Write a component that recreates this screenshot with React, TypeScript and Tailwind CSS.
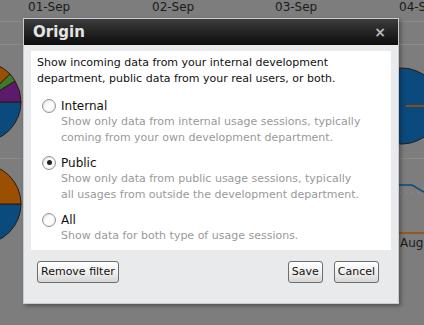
import { useState } from "react";

const options = [
    {
        id: "internal",
        label: "Internal",
        lines: ["Show only data from internal usage sessions, typically", "coming from your own development department."],
    },
    {
        id: "public",
        label: "Public",
        lines: ["Show only data from public usage sessions, typically", "all usages from outside the development department."],
    },
    {
        id: "all",
        label: "All",
        lines: ["Show data for both type of usage sessions."],
    },
];

function Backdrop() {
    return (
        <div className="absolute inset-0 overflow-hidden bg-[#7d7d7d]">
            <div className="h-[22px] whitespace-nowrap border-b border-[#8a8a8a] text-[12px] text-[#1a1a1a]">
                <span className="absolute left-[28px] top-[-2px]">01-Sep</span>
                <span className="absolute left-[152px] top-[-2px]">02-Sep</span>
                <span className="absolute left-[275px] top-[-2px]">03-Sep</span>
                <span className="absolute left-[399px] top-[-2px]">04-Sep</span>
            </div>
            <div className="absolute left-0 right-0 top-[44px] border-t border-[#8c8c8c]" />
            <div className="absolute left-0 right-0 top-[158px] border-t border-[#8a8a8a]" />
            <svg className="absolute left-0 top-0" width="424" height="325">
                <g stroke="#2a1a10" strokeWidth="1">
                    <path d="M-19 102 L21 102 A40 40 0 0 1 -19 142 Z" fill="#0b4a7c" />
                    <path d="M-19 102 L15 81 A40 40 0 0 1 21 102 Z" fill="#5c1a6c" />
                    <path d="M-19 102 L10 74 A40 40 0 0 1 15 81 Z" fill="#3b7a28" />
                    <path d="M-19 102 L-19 62 A40 40 0 0 1 10 74 Z" fill="#9a4f02" />
                    <path d="M-19 204 L21 204 A40 40 0 0 1 -19 244 Z" fill="#0b4a7c" />
                    <path d="M-19 204 L-19 164 A40 40 0 0 1 21 204 Z" fill="#9a4f02" />
                    <path d="M440 106 A38 38 0 0 0 402 68 A38 38 0 0 0 402 144 A38 38 0 0 0 440 106 Z" fill="#0b4a7c" />
                </g>
                <line x1="406" y1="106" x2="424" y2="106" stroke="#8a4a10" strokeWidth="2" />
                <path d="M398 185 L412 185 L424 192" fill="none" stroke="#0b4a7c" strokeWidth="1.5" />
                <path d="M400 193 L424 193" fill="none" stroke="#9a9a9a" strokeDasharray="1 5" />
                <line x1="398" y1="233" x2="424" y2="233" stroke="#9a4f02" strokeWidth="1.5" />
            </svg>
            <span className="absolute left-[400px] top-[234px] text-[12px] text-[#1a1a1a]">Aug</span>
        </div>
    );
}

function Radio({ checked, onSelect }: { checked: boolean; onSelect: () => void }) {
    return (
        <span
            onClick={onSelect}
            className="ml-[5px] flex h-[14px] w-[14px] items-center justify-center rounded-full border border-[#8e969e] bg-gradient-to-br from-[#e4e8ec] via-white to-[#f4f4f4] shadow-[inset_0_0_1px_rgba(0,0,0,0.25)]"
        >
            {checked && <span className="h-[5px] w-[5px] rounded-full bg-[#222]" />}
        </span>
    );
}

const buttonClass =
    "h-[22px] rounded-[3px] border border-[#6e6e6e] bg-gradient-to-b from-white via-[#f0f0f0] to-[#d6d6d6] px-[3px] text-[11px] text-[#111]";

export default function App() {
    const [origin, setOrigin] = useState("public");

    return (
        <div
            className="relative h-[325px] w-[424px] overflow-hidden"
            style={{ fontFamily: "'DejaVu Sans', Verdana, sans-serif" }}
        >
            <Backdrop />
            <div className="absolute left-[23px] top-[18px] flex w-[376px] flex-col border border-[#c8ccd0] bg-[#e8eaec] shadow-[2px_2px_4px_rgba(0,0,0,0.35)]">
                <div className="flex h-[26px] items-center justify-between bg-gradient-to-b from-[#3d3d3d] to-[#0d0d0d] pl-[9px] pr-[12px]">
                    <span className="text-[15px] font-bold text-[#e4e4e4]">Origin</span>
                    <span className="text-[14px] font-bold leading-none text-[#b8b8b8]">×</span>
                </div>
                <div className="mx-[7px] mt-[6px] bg-white px-[6px] pb-[6px] pt-[4px] text-[11px] leading-[16px] text-[#111]">
                    <p>Show incoming data from your internal development</p>
                    <p>department, public data from your real users, or both.</p>
                    <div className="mt-[10px] flex flex-col gap-[8px]">
                        {options.map((opt) => (
                            <div key={opt.id} className="flex flex-col">
                                <div className="flex h-[17px] items-center gap-[5px]">
                                    <Radio checked={origin === opt.id} onSelect={() => setOrigin(opt.id)} />
                                    <span className="text-[12px] text-[#111]">{opt.label}</span>
                                </div>
                                <div className="pl-[24px] text-[#999]">
                                    {opt.lines.map((line) => (
                                        <p key={line}>{line}</p>
                                    ))}
                                </div>
                            </div>
                        ))}
                    </div>
                </div>
                <div className="flex items-center pb-[20px] pl-[13px] pr-[19px] pt-[11px]">
                    <button className={buttonClass}>Remove filter</button>
                    <div className="ml-auto flex gap-[11px]">
                        <button className={buttonClass}>Save</button>
                        <button className={buttonClass}>Cancel</button>
                    </div>
                </div>
            </div>
        </div>
    );
}
